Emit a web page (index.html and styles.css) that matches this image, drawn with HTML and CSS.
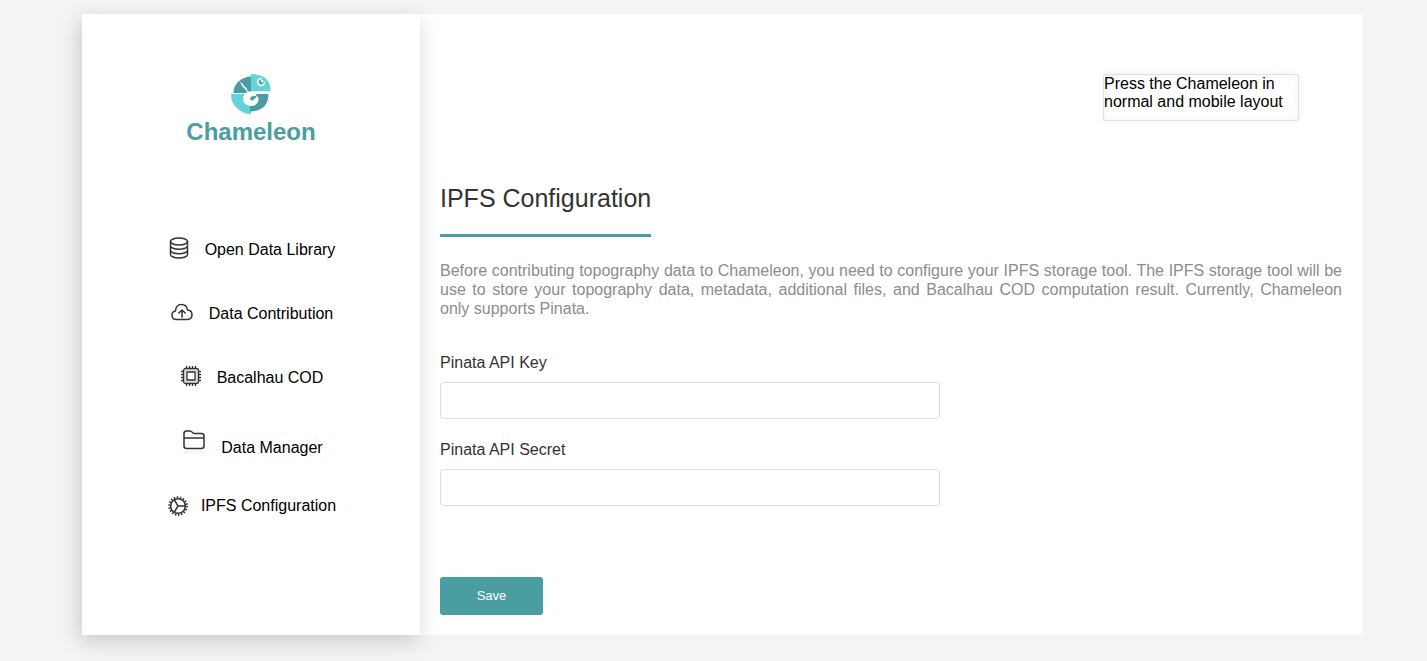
FILE: index.html
```html
<!DOCTYPE html>
<html lang="en">
<head>
<meta charset="utf-8">
<title>Chameleon</title>
<link rel="stylesheet" href="styles.css">
</head>
<body>
<div class="layout">
  <aside class="sidebar">
    <div class="brand">
      <svg class="brand-logo" viewBox="0 0 40 40" aria-hidden="true">
        <path d="M20 19H2.500Q2.500 12 7 8Q13 2.500 20 2.500Z" fill="#4a9ea1"/>
        <path d="M20 17.500V0Q26 0 31 2Q36 4.500 38 9Q40 13 39.500 17.500Z" fill="#62d3d6"/>
        <path d="M20 20H0Q0 29 6 34Q12 40 20 40Z" fill="#62d3d6"/>
        <path d="M19 20H37.500Q37.500 29 32 33.500Q27 37.500 19 37.500Z" fill="#4a9ea1"/>
        <path d="M9 8L11 9L13.500 12.500L15.500 14L17 17.500H40V20H27Q24 20 25.500 22Q28 22.500 27.500 26Q26 32 20 32Q12 31 12 25Q12 20 16.500 18L13.500 14.500L11.500 12.500Z" fill="#fff"/>
        <path d="M25.500 22Q21.500 21 19.500 23.500Q18.500 26.500 21 26.500Q23 26.500 23.500 24.500Q25 24.500 25.500 22Z" fill="#4a9ea1"/>
        <path d="M30.500 4.500A3.500 3.500 0 1 0 33.500 8.500" fill="none" stroke="#fff" stroke-width="1.600" stroke-linecap="round"/>
        <circle cx="30" cy="8" r="2" fill="#4a9ea1"/>
        <circle cx="31" cy="7" r="1.200" fill="#fff"/>
      </svg>
      <h2 class="brand-name">Chameleon</h2>
    </div>
    <nav class="menu">
      <a class="menu-item" href="#library">
        <svg class="icon icon-database" viewBox="0 0 20 22" aria-hidden="true"><ellipse cx="10" cy="4.500" rx="8.500" ry="3.500"/><path d="M1.500 4.500v13c0 2 3.800 3.500 8.500 3.500s8.500-1.500 8.500-3.500v-13M1.500 8.800c0 2 3.800 3.500 8.500 3.500s8.500-1.500 8.500-3.500M1.500 13.200c0 2 3.800 3.500 8.500 3.500s8.500-1.500 8.500-3.500"/></svg>
        <span>Open Data Library</span>
      </a>
      <a class="menu-item" href="#contribution">
        <svg class="icon icon-cloud" viewBox="0 0 22 18" aria-hidden="true"><path d="M5.500 16.500C2.500 16.500 1 14.500 1 12.200C1 9.800 2.500 8.300 4.500 8C4.500 4.500 6.500 1.500 10.500 1.500C14 1.500 16 4 16.500 7C19.500 7.200 21 9.300 21 11.800C21 14.500 19.500 16.500 16.500 16.500ZM11 14.200V7.200M7.800 10L11 7L14.200 10"/></svg>
        <span>Data Contribution</span>
      </a>
      <a class="menu-item" href="#cod">
        <svg class="icon icon-chip" viewBox="0 0 20 20" aria-hidden="true"><path d="M5.500 .5v19M8.500 .5v19M11.500 .5v19M14.500 .5v19M.5 5.500h19M.5 8.500h19M.5 11.500h19M.5 14.500h19"/><rect x="2.500" y="2.500" width="15" height="15" rx="2" fill="#ddd"/><rect x="6" y="6" width="8" height="8" fill="#fff"/></svg>
        <span>Bacalhau COD</span>
      </a>
      <a class="menu-item menu-item-manager" href="#manager">
        <svg class="icon icon-folder" viewBox="0 0 22 24" aria-hidden="true"><path d="M1 16V3.500Q1 1 3.500 1H7.500L11 3.500H18.500Q21 3.500 21 6V16Q21 18.500 18.500 18.500H3.500Q1 18.500 1 16ZM1 8H21"/><path class="folder-shade" d="M1 22H21"/></svg>
        <span>Data Manager</span>
      </a>
      <a class="menu-item menu-item-ipfs" href="#ipfs">
        <svg class="icon icon-gear" viewBox="0 0 20 20" aria-hidden="true"><circle cx="10" cy="10" r="8.800" stroke-width="2" stroke-dasharray="1.500 1.572"/><circle cx="10" cy="10" r="7.300"/><path d="M10 10L6.200 3.700M10 10H17.300M10 10L6.200 16.300"/></svg>
        <span>IPFS Configuration</span>
      </a>
    </nav>
  </aside>
  <main class="content">
    <div class="notice">Press the Chameleon in normal and mobile layout</div>
    <h1 class="title">IPFS Configuration</h1>
    <p class="intro">Before contributing topography data to Chameleon, you need to configure your IPFS storage tool. The IPFS storage tool will be use to store your topography data, metadata, additional files, and Bacalhau COD computation result. Currently, Chameleon only supports Pinata.</p>
    <form class="form">
      <div class="field">
        <label for="api-key">Pinata API Key</label>
        <input id="api-key" type="text">
      </div>
      <div class="field">
        <label for="api-secret">Pinata API Secret</label>
        <input id="api-secret" type="text">
      </div>
      <button class="save" type="button">Save</button>
    </form>
  </main>
</div>
</body>
</html>
```
FILE: styles.css
```css
* {
  box-sizing: border-box;
}

body {
  margin: 0;
  padding: 14px 65px 26px 82px;
  background: #f4f4f4;
  color: #000;
  font: 16px/18px "Liberation Sans", Arial, sans-serif;
}

.layout {
  display: flex;
  background: #fff;
}

.sidebar {
  flex: 0 0 338px;
  padding: 60px 0;
  background: #fff;
  box-shadow: -2px 6px 20px rgba(0, 0, 0, 0.18);
}

.brand {
  display: flex;
  flex-direction: column;
  align-items: center;
}

.brand-logo {
  width: 40px;
  height: 40px;
}

.brand-name {
  margin: 4px 0 0;
  color: #4a9ea1;
  font-size: 24px;
  line-height: 28px;
}

.menu {
  display: flex;
  flex-direction: column;
  margin-top: 70px;
  padding-left: 2px;
}

.menu-item {
  display: flex;
  align-items: center;
  justify-content: center;
  height: 64px;
  gap: 16px;
  color: #000;
  text-decoration: none;
}

.menu-item span {
  padding-top: 4px;
}

.icon {
  fill: none;
  stroke: #333;
  stroke-width: 1.5;
  stroke-linecap: round;
  stroke-linejoin: round;
}

.icon-database {
  width: 20px;
  height: 22px;
}

.icon-cloud {
  width: 22px;
  height: 18px;
}

.icon-chip {
  width: 20px;
  height: 20px;
  stroke-width: 1.3;
}

.icon-folder {
  width: 22px;
  height: 24px;
}

.icon-folder .folder-shade {
  stroke: #f5f5f5;
  stroke-width: 3;
}

.icon-gear {
  width: 20px;
  height: 20px;
  stroke-linecap: butt;
}

.menu-item-manager {
  padding: 4px 0 0 2px;
}

.menu-item-manager span {
  padding-top: 12px;
}

.menu-item-ipfs {
  gap: 13px;
  padding-top: 4px;
}

.menu-item-ipfs span {
  padding-top: 0;
}

.content {
  display: flex;
  flex: 1;
  flex-direction: column;
  align-items: flex-start;
  min-width: 0;
  padding: 60px 20px 20px;
}

.notice {
  align-self: flex-end;
  width: 196px;
  height: 47px;
  margin-right: 43px;
  border: 1px solid #e0e0e0;
  border-radius: 2px;
  box-shadow: 0 0 10px rgba(0, 0, 0, 0.06), inset 0 0 10px rgba(0, 0, 0, 0.04);
}

.title {
  margin: 63px 0 24px;
  padding-bottom: 22px;
  border-bottom: 3px solid #4a9ea1;
  color: #333;
  font-size: 25px;
  font-weight: 400;
  line-height: 28px;
}

.intro {
  margin: 0 0 36px;
  color: #8c8c8c;
  line-height: 19px;
  text-align: justify;
}

.form {
  width: 100%;
}

.field {
  display: flex;
  flex-direction: column;
  gap: 10px;
  max-width: 500px;
  margin-bottom: 22px;
  color: #333;
}

.field input {
  width: 100%;
  height: 37px;
  padding: 0 10px;
  border: 1px solid #ddd;
  border-radius: 3px;
  background: #fff;
  font: inherit;
}

.save {
  width: 103px;
  height: 38px;
  margin-top: 49px;
  border: 0;
  border-radius: 3px;
  background: #4a9ea1;
  color: #fff;
  font: 13px/18px "Liberation Sans", Arial, sans-serif;
}
```
